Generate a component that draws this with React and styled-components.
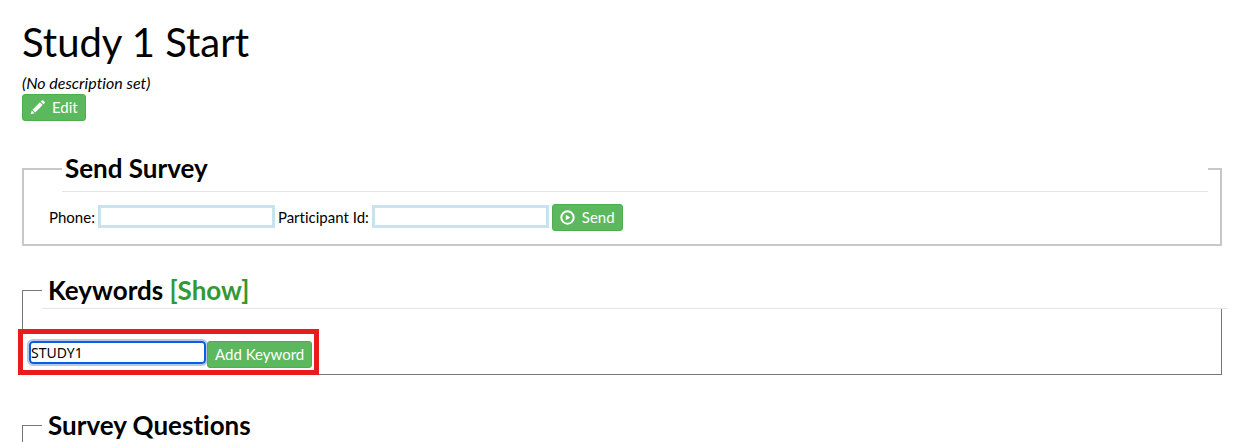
import styled, { createGlobalStyle, css } from 'styled-components';

const GlobalStyle = createGlobalStyle`
  * {
    box-sizing: border-box;
  }

  body {
    margin: 0;
    background: #fff;
    color: #000;
    font-family: Lato, sans-serif;
    font-size: 15px;
    font-variant-ligatures: none;
    line-height: 20px;
  }
`;

const Page = styled.main`
  height: 100vh;
  padding: 16px 28px 0 22px;
  overflow: hidden;
`;

const Title = styled.h1`
  margin: 0;
  font-size: 40px;
  font-weight: 400;
  line-height: 52px;
`;

const Description = styled.p`
  margin: 5px 0 1px;
  font-size: 16px;
  font-style: italic;
`;

const Button = styled.button`
  display: inline-flex;
  align-items: center;
  gap: 7px;
  height: 27px;
  padding: 0 7px 1px;
  border: 1px solid #4cae4c;
  border-radius: 3px;
  background: #5cb85c;
  color: #fff;
  font: inherit;
  cursor: pointer;
`;

const Icon = styled.svg`
  width: 15px;
  height: 15px;
  fill: currentColor;
`;

const Legend = styled.legend`
  width: calc(100% - 6px);
  margin-left: 14px;
  padding: 0 6px;
  border-bottom: 1px solid #e5e5e5;
  font-size: 26px;
  font-weight: 700;
  line-height: 36px;
`;

const Panel = styled.fieldset`
  position: relative;
  min-width: 0;
  margin: 32px 0 0;
  padding: 32px 2px 6px 5px;
  border: 1px solid #767676;

  ${(props) =>
    props.$framed &&
    css`
      margin: 25px 0 26px;
      padding: 12px 12px 13px 25px;
      border: 2px solid #c8c8c8;

      ${Legend} {
        width: calc(100% - 13px);
        margin-left: 13px;
        padding: 0 3px;
        line-height: 45px;
      }

      & + fieldset {
        margin-top: 0;
      }
    `}
`;

const Row = styled.form`
  display: flex;
  align-items: flex-start;
  gap: ${(props) => props.$gap ?? 3}px;
`;

const Field = styled.label`
  display: flex;
  align-items: center;
  gap: 3px;
  height: 25px;
`;

const Input = styled.input`
  width: 177px;
  height: 23px;
  padding: 0;
  border: 3px solid #c8e2f0;
  background: #fff;
  color: #000;
  font: inherit;
`;

const KeywordInput = styled(Input)`
  margin: 0 1px;
  border: 2px solid #0a5fdc;
  border-radius: 4px;
  outline: 2px solid #b4c8ec;
  outline-offset: 0;
  font-family: 'Noto Sans', sans-serif;
  font-size: 14px;
`;

const ToggleLink = styled.a`
  color: #339933;
  text-decoration: none;
`;

const Highlight = styled.div`
  position: absolute;
  bottom: -1px;
  left: -5px;
  width: 301px;
  height: 46px;
  border: 5px solid #e81c1c;
  pointer-events: none;
`;

function PencilIcon() {
  return (
    <Icon viewBox="0 0 16 16" aria-hidden="true">
      <path d="M11.4 1.7 12.5.6a1.1 1.1 0 0 1 1.6 0l1.3 1.3a1.1 1.1 0 0 1 0 1.6l-1.1 1.1zM10.6 2.5l2.9 2.9-7.9 7.9-2.9-2.9zM1.9 11.2l2.9 2.9L.7 15.3z" />
    </Icon>
  );
}

function PlayIcon() {
  return (
    <Icon viewBox="0 0 16 16" aria-hidden="true">
      <path
        fillRule="evenodd"
        d="M8 .3a7.7 7.7 0 1 1 0 15.4A7.7 7.7 0 0 1 8 .3zm0 2.2a5.5 5.5 0 1 0 0 11A5.5 5.5 0 0 0 8 2.5zM6.2 5v6L11 8z"
      />
    </Icon>
  );
}

function App() {
  return (
    <>
      <GlobalStyle />
      <Page>
        <Title>Study 1 Start</Title>
        <Description>(No description set)</Description>
        <Button type="button">
          <PencilIcon />
          Edit
        </Button>

        <Panel $framed>
          <Legend>Send Survey</Legend>
          <Row>
            <Field>
              Phone:
              <Input type="text" name="phone" />
            </Field>
            <Field>
              Participant Id:
              <Input type="text" name="participant" />
            </Field>
            <Button type="button">
              <PlayIcon />
              Send
            </Button>
          </Row>
        </Panel>

        <Panel>
          <Legend>
            Keywords <ToggleLink href="#keywords">[Show]</ToggleLink>
          </Legend>
          <Row $gap={0}>
            <KeywordInput
              type="text"
              name="keyword"
              aria-label="Keyword"
              defaultValue="STUDY1"
            />
            <Button type="button">Add Keyword</Button>
          </Row>
          <Highlight />
        </Panel>

        <Panel>
          <Legend>Survey Questions</Legend>
        </Panel>
      </Page>
    </>
  );
}

export default App;
